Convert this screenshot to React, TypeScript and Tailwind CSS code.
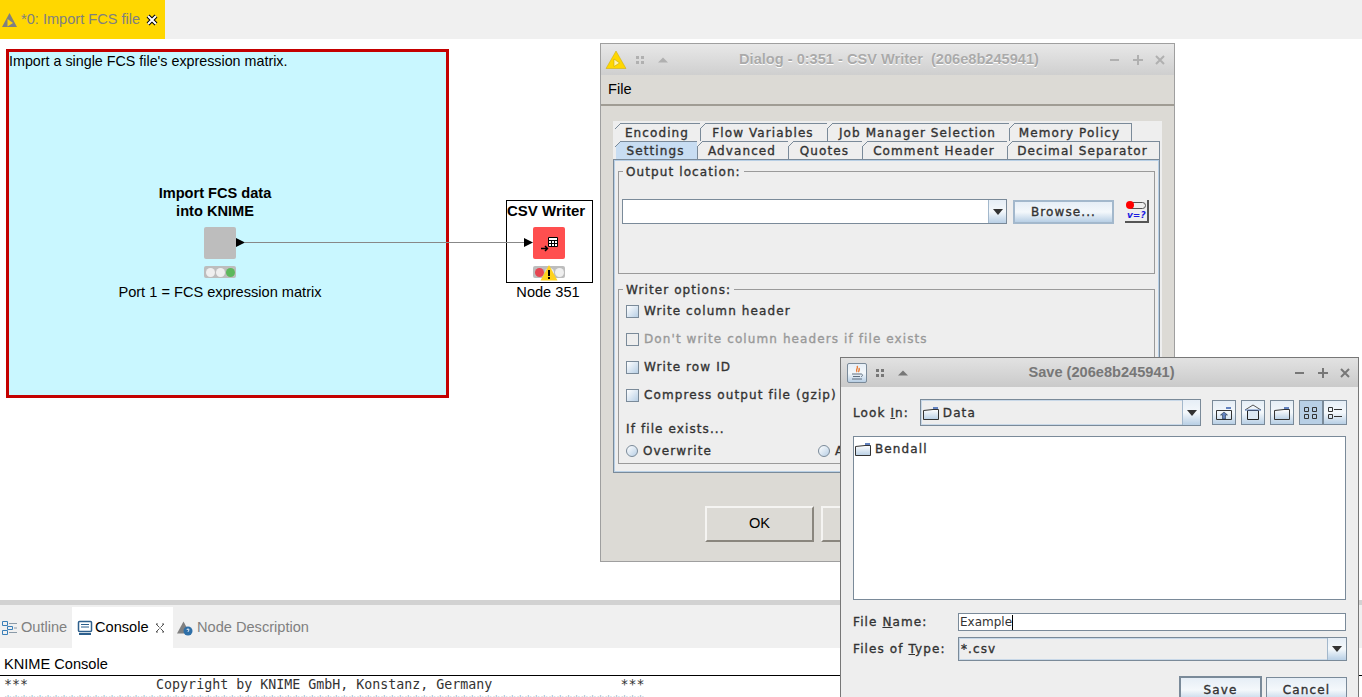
const sans = "font-['Liberation_Sans',Arial,sans-serif]";
const metal = "font-['DejaVu_Sans',sans-serif] text-[12px] font-normal text-[#333333] tracking-[1.1px] [-webkit-text-stroke:0.35px_currentColor]";
const oceanBtn = "bg-gradient-to-b from-[#e6eef6] via-[#f4f8fb] to-[#b8cfe5]";

function KnimeTriangle({ fill = "#808080", className }: { fill?: string; className?: string }) {
  return (
    <svg viewBox="0 0 16 16" className={className}>
      <path d="M8 1 L15.5 15 H0.5 Z" fill={fill} />
      <path d="M6 7 L11.5 11 L6 14.5 Z" fill={fill === "#808080" ? "#ffd700" : "#fff"} />
    </svg>
  );
}

function TitleControls({ dark }: { dark?: boolean }) {
  const c = dark ? "#777777" : "#b0b0b0";
  return (
    <svg width="57" height="12" viewBox="0 0 57 12">
      <path d="M1 6h9" stroke={c} strokeWidth="2" />
      <path d="M24 6h10M29 1v10" stroke={c} strokeWidth="2" />
      <path d="M47 2l8 8M55 2l-8 8" stroke={c} strokeWidth="2" />
    </svg>
  );
}

function GripMenu({ dark }: { dark?: boolean }) {
  const c = dark ? "#777777" : "#b0b0b0";
  return (
    <svg width="34" height="12" viewBox="0 0 34 12">
      <rect x="1" y="2" width="3" height="3" fill={c} />
      <rect x="6" y="2" width="3" height="3" fill={c} />
      <rect x="1" y="7" width="3" height="3" fill={c} />
      <rect x="6" y="7" width="3" height="3" fill={c} />
      <path d="M23 8.500l5-5 5 5z" fill={c} />
    </svg>
  );
}

function Tab({ label, w, active }: { label: string; w: number; active?: boolean }) {
  return (
    <div
      style={{ width: w }}
      className={
        "relative flex h-[18px] shrink-0 items-center justify-center border-r border-t border-[#7a8a99] pr-[2px] " +
        (active ? "bg-[#c8ddf2]" : "bg-[#eeeeee]")
      }
    >
      <svg width="6" height="6" viewBox="0 0 6 6" className="absolute -left-px -top-px">
        <path d="M0 0h6L0 6z" fill="#eeeeee" />
        <path d="M0 6L6 0" stroke="#7a8a99" />
      </svg>
      <span className={metal + " whitespace-pre"}>{label}</span>
    </div>
  );
}

function Check({ label, disabled }: { label: string; disabled?: boolean }) {
  return (
    <div className="flex h-[28px] items-center gap-[5px]">
      <span
        className={
          "h-[13px] w-[13px] border border-[#7a8a99] " +
          (disabled ? "bg-[#eeeeee]" : "bg-gradient-to-br from-white to-[#b8cfe5]")
        }
      />
      <span className={metal + (disabled ? " !text-[#999999]" : "")}>{label}</span>
    </div>
  );
}

function Radio({ label, className }: { label: string; className?: string }) {
  return (
    <div className={"flex items-center gap-[5px] " + (className || "")}>
      <span className="h-[12px] w-[12px] rounded-full border border-[#7a8a99] bg-gradient-to-br from-white to-[#b8cfe5]" />
      <span className={metal}>{label}</span>
    </div>
  );
}

function ComboArrow({ w }: { w: number }) {
  return (
    <div
      style={{ width: w }}
      className={"flex h-full shrink-0 items-center justify-center border-l border-[#a3b8cc] " + oceanBtn}
    >
      <svg width="10" height="6" viewBox="0 0 10 6">
        <path d="M0 0h10L5 6z" fill="#333333" />
      </svg>
    </div>
  );
}

function Folder({ className }: { className?: string }) {
  return (
    <svg viewBox="0 0 16 14" className={className}>
      <defs>
        <linearGradient id="fld" x1="0" y1="0" x2="0" y2="1">
          <stop offset="0" stopColor="#ffffff" />
          <stop offset="1" stopColor="#b8cfe5" />
        </linearGradient>
      </defs>
      <path d="M10 1h5v2h-5z" fill="#6382bf" />
      <path d="M0.5 4.5 L10 3.5 H15.5 V13.5 H0.5 Z" fill="url(#fld)" stroke="#333333" />
    </svg>
  );
}

function ToolButton({ children, on }: { children: React.ReactNode; on?: boolean }) {
  return (
    <div
      className={
        "flex h-[25px] w-[24px] items-center justify-center border border-[#7a8a99] " +
        (on ? "bg-[#b8cfe5]" : oceanBtn)
      }
    >
      {children}
    </div>
  );
}

function MetalButton({ label, w, strong }: { label: string; w: number; strong?: boolean }) {
  return (
    <div
      style={{ width: w }}
      className={
        "flex h-[26px] items-center justify-center border border-[#7a8a99] " +
        oceanBtn +
        (strong ? " outline outline-1 outline-[#7a8a99]" : "")
      }
    >
      <span className={metal}>{label}</span>
    </div>
  );
}

function Traffic({ colors }: { colors: string[] }) {
  return (
    <div className="flex h-[12px] w-[32px] items-center justify-center gap-[1px] rounded-[2px] bg-[#bdbdbd]">
      {colors.map((c, i) => (
        <span key={i} style={{ background: c }} className="h-[9px] w-[9px] rounded-full" />
      ))}
    </div>
  );
}

function Fieldset({ title, className, children }: { title: string; className?: string; children?: React.ReactNode }) {
  return (
    <div className={"relative border border-[#9a9a9a] " + (className || "")}>
      <span className={metal + " absolute -top-[9px] left-[4px] bg-[#eeeeee] px-[3px] !text-[#333333]"}>{title}</span>
      {children}
    </div>
  );
}

function CsvDialog() {
  return (
    <div className="absolute left-[600px] top-[4px] flex h-[519px] w-[575px] flex-col border border-[#9f9f9f] bg-[#dcdad5]">
      <div className={"flex h-[31px] shrink-0 items-center bg-gradient-to-b from-[#e8e8e8] to-[#cfcfcf] pl-[4px] pr-[8px] " + sans}>
        <KnimeWarn />
        <div className="ml-[8px]">
          <GripMenu />
        </div>
        <span className="flex-1 whitespace-pre text-center text-[14.6px] font-bold text-[#aaaaaa] [text-shadow:0_1px_0_#ffffff]">
          {"Dialog - 0:351 - CSV Writer  (206e8b245941)"}
        </span>
        <TitleControls />
      </div>
      <div className={"flex h-[31px] shrink-0 items-center border-b-2 border-[#a09c94] pl-[7px] text-[14.6px] text-black " + sans}>File</div>
      <div className="ml-[12px] mt-[15px] w-[549px] bg-[#eeeeee] pt-[2px]">
        <div className="flex pl-[3px]">
          <Tab label="Encoding" w={85} />
          <Tab label="Flow Variables" w={127} />
          <Tab label="Job Manager Selection" w={182} />
          <Tab label="Memory Policy" w={122} />
        </div>
        <div className="flex pl-[3px]">
          <Tab label="Settings" w={82} active />
          <Tab label="Advanced" w={91} />
          <Tab label="Quotes" w={74} />
          <Tab label="Comment Header" w={145} />
          <Tab label="Decimal Separator" w={152} />
        </div>
        <div className="mr-[2px] h-[314px] border border-[#7a8a99] bg-[#eeeeee] p-[2px] ring-1 ring-inset ring-[#b8cfe5]">
          <div className="flex h-full flex-col px-[2px] pt-[9px]">
            <Fieldset title="Output location:" className="h-[103px]">
              <div className="ml-[3px] mt-[27px] flex items-center">
                <div className="flex h-[25px] w-[385px] border border-[#7a8a99] bg-white">
                  <div className="flex-1" />
                  <ComboArrow w={18} />
                </div>
                <div className={"ml-[6px] flex h-[24px] w-[101px] items-center justify-center border-2 border-[#a3b8cc] " + oceanBtn}>
                  <span className={metal}>Browse...</span>
                </div>
                <div className="relative ml-[11px] h-[23px] w-[24px] border-b-2 border-r-2 border-[#555555] bg-[#eeeeee]">
                  <span className="absolute left-[5px] top-[2px] h-[7px] w-[16px] rounded-r-full border border-[#555555]" />
                  <span className="absolute left-[1px] top-[1px] h-[8px] w-[8px] rounded-full bg-[#ff0000]" />
                  <span className="absolute left-[2px] top-[10px] font-['DejaVu_Sans',sans-serif] text-[9px] font-bold italic leading-[10px] text-[#1a1ae0]">v=?</span>
                </div>
              </div>
            </Fieldset>
            <Fieldset title="Writer options:" className="mt-[15px] h-[175px]">
              <div className="flex flex-col pl-[7px] pt-[7px]">
                <Check label="Write column header" />
                <Check label="Don't write column headers if file exists" disabled />
                <Check label="Write row ID" />
                <Check label="Compress output file (gzip)" />
                <span className={metal + " mt-[11px]"}>If file exists...</span>
                <div className="mt-[4px] flex">
                  <Radio label="Overwrite" className="w-[192px]" />
                  <Radio label="Append" />
                </div>
              </div>
            </Fieldset>
          </div>
        </div>
      </div>
      <div className="ml-[104px] mt-[33px] flex gap-[7px]">
        <div className={"flex h-[36px] w-[109px] items-center justify-center border-2 border-b-[#8a867e] border-l-[#f5f4f2] border-r-[#8a867e] border-t-[#f5f4f2] text-[14.6px] text-black " + sans}>OK</div>
        <div className={"flex h-[36px] w-[109px] items-center justify-center border-2 border-b-[#8a867e] border-l-[#f5f4f2] border-r-[#8a867e] border-t-[#f5f4f2] text-[14.6px] text-black " + sans}>Cancel</div>
      </div>
    </div>
  );
}

function KnimeWarn() {
  return (
    <svg width="22" height="20" viewBox="0 0 22 20">
      <path d="M11 1 L21 18.500 H1 Z" fill="#ffd700" stroke="#c8a800" strokeWidth="0.5" />
      <path d="M9 9 L14.500 13 L9 16.500 Z" fill="#fff5b0" stroke="#b89a00" strokeWidth="0.5" />
    </svg>
  );
}

function JavaIcon() {
  return (
    <div className={"flex h-[20px] w-[20px] items-center justify-center rounded-[2px] border border-[#7a8a99] " + oceanBtn}>
      <svg width="16" height="16" viewBox="0 0 16 16">
        <path d="M8 1c2 2-2 3 0 6M10 3c1 2-1 3 0 4" stroke="#e8772e" strokeWidth="1.4" fill="none" />
        <path d="M3 9h9M4 11.500h7M3 14h10" stroke="#5f6f80" strokeWidth="1.2" />
        <path d="M12 9c2 0 2 2.500 0 2.500" stroke="#5f6f80" fill="none" />
      </svg>
    </div>
  );
}

function SaveDialog() {
  return (
    <div className="absolute left-[840px] top-[318px] flex h-[345px] w-[519px] flex-col border border-[#777777] bg-[#eeeeee]">
      <div className={"flex h-[29px] shrink-0 items-center bg-gradient-to-b from-[#e2e2e2] to-[#cacaca] pl-[6px] pr-[7px] " + sans}>
        <JavaIcon />
        <div className="ml-[8px]">
          <GripMenu dark />
        </div>
        <span className="flex-1 text-center text-[14.6px] font-bold text-[#777777]">Save (206e8b245941)</span>
        <TitleControls dark />
      </div>
      <div className="flex flex-col pl-[12px] pr-[11px]">
        <div className="mt-[12px] flex items-center">
          <span className={metal + " w-[67px]"}>
            Look <u>I</u>n:
          </span>
          <div className="flex h-[27px] w-[282px] border border-[#7a8a99] bg-[#eeeeee] ring-1 ring-inset ring-[#c8d8e8]">
            <div className="flex flex-1 items-center gap-[4px] pl-[2px]">
              <Folder className="h-[14px] w-[16px]" />
              <span className={metal}>Data</span>
            </div>
            <ComboArrow w={18} />
          </div>
          <div className="ml-[11px] flex gap-[5px]">
            <ToolButton>
              <svg width="16" height="14" viewBox="0 0 16 14">
                <path d="M10 1h5v2h-5z" fill="#6382bf" />
                <path d="M0.500 4.500H15.500V13.500H0.500Z" fill="none" stroke="#333" />
                <path d="M8 6l3.500 3H9.500V13H6.500V9H4.500z" fill="#6382bf" stroke="#123" strokeWidth="0.5" />
              </svg>
            </ToolButton>
            <ToolButton>
              <svg width="18" height="17" viewBox="0 0 18 17">
                <path d="M1 6L9 1l8 5" fill="none" stroke="#555" />
                <path d="M3.500 6.500h11v9h-11z" fill="#dde8f3" stroke="#222" />
                <path d="M1 6h16" stroke="#6382bf" />
              </svg>
            </ToolButton>
            <ToolButton>
              <Folder className="h-[14px] w-[16px]" />
            </ToolButton>
            <div className="flex">
              <ToolButton on>
                <svg width="16" height="14" viewBox="0 0 16 14" fill="none" stroke="#333">
                  <path d="M1.500 1.500h4v4h-4zM1.500 8.500h4v4h-4zM9.500 1.500h4v4h-4zM9.500 8.500h4v4h-4z" />
                </svg>
              </ToolButton>
              <ToolButton>
                <svg width="16" height="14" viewBox="0 0 16 14" fill="none" stroke="#333">
                  <path d="M1.500 1.500h4v4h-4zM1.500 8.500h4v4h-4zM7 3.500h8M7 10.500h8" />
                </svg>
              </ToolButton>
            </div>
          </div>
        </div>
        <div className="mt-[10px] h-[164px] w-[493px] border border-[#7a8a99] bg-white pl-[1px] pt-[3px]">
          <div className="flex items-center gap-[4px]">
            <Folder className="h-[14px] w-[16px]" />
            <span className={metal}>Bendall</span>
          </div>
        </div>
        <div className="mt-[13px] flex items-center">
          <span className={metal + " w-[105px]"}>
            File <u>N</u>ame:
          </span>
          <div className="flex h-[18px] w-[388px] items-center border border-[#7a8a99] bg-white pl-[1px] font-['DejaVu_Sans',sans-serif] text-[12px] text-[#333333]">
            Example<span className="h-[15px] w-px bg-black" />
          </div>
        </div>
        <div className="mt-[6px] flex items-center">
          <span className={metal + " w-[105px]"}>
            Files of <u>T</u>ype:
          </span>
          <div className="flex h-[24px] w-[389px] border border-[#7a8a99] bg-[#eeeeee] ring-1 ring-inset ring-[#c8d8e8]">
            <span className={metal + " flex flex-1 items-center pl-[2px]"}>*.csv</span>
            <ComboArrow w={19} />
          </div>
        </div>
        <div className="mt-[16px] flex justify-end gap-[5px]">
          <MetalButton label="Save" w={81} strong />
          <MetalButton label="Cancel" w={81} />
        </div>
      </div>
    </div>
  );
}

function Workflow() {
  return (
    <div className="relative h-[561px] shrink-0 bg-white">
      <div className={"absolute left-[6px] top-[10px] h-[349px] w-[443px] border-[3px] border-[#c40000] bg-[#c9f7ff] text-[14.3px] leading-[18px] text-black " + sans}>
        <div>Import a single FCS file's expression matrix.</div>
      </div>

      <div className={"absolute left-[506px] top-[161px] h-[83px] w-[87px] border border-black bg-white pt-px text-[15px] font-bold leading-[18px] text-black " + sans}>CSV Writer</div>

      <div className={"absolute left-[120px] top-[145px] w-[200px] pr-[10px] text-center text-[14.6px] font-bold leading-[18px] text-black " + sans}>
        Import FCS data
        <br />
        into KNIME
      </div>
      <div className="absolute left-[204px] top-[188px] h-[32px] w-[32px] rounded-[2px] bg-[#bdbdbd]" />
      <div className="absolute left-[204px] top-[227px]">
        <Traffic colors={["#efefef", "#efefef", "#5cb85c"]} />
      </div>
      <div className={"absolute left-[70px] top-[244px] w-[300px] text-center text-[14.6px] leading-[18px] text-black " + sans}>Port 1 = FCS expression matrix</div>

      <svg width="300" height="14" viewBox="0 0 300 14" className="absolute left-[236px] top-[196px]">
        <path d="M9 7.500H290" stroke="#888888" />
        <path d="M0 3l9 4.500-9 4.500z" fill="#000000" />
        <path d="M288 3l9 4.500-9 4.500z" fill="#000000" />
      </svg>

      <div className="absolute left-[533px] top-[188px] flex h-[32px] w-[32px] items-center justify-center rounded-[2px] bg-[#ff4f4f]">
        <svg width="20" height="20" viewBox="0 0 20 20">
          <path d="M9.500 4.500h9v9h-9zM9.500 7.500h9M9.500 10.500h9M12.500 7.500v6M15.500 7.500v6" fill="#fff" stroke="#000" />
          <path d="M2 15.500h6M6 13l2.500 2.500L6 18" fill="none" stroke="#000" strokeWidth="1.500" />
        </svg>
      </div>
      <div className="absolute left-[533px] top-[227px]">
        <Traffic colors={["#e64552", "#efefef", "#efefef"]} />
      </div>
      <svg width="18" height="16" viewBox="0 0 18 16" className="absolute left-[540px] top-[226px]">
        <path d="M9 0l8.500 15.500H.5z" fill="#ffd21f" />
        <path d="M9 5v6M9 12v2" stroke="#000" strokeWidth="2" />
      </svg>
      <div className={"absolute left-[498px] top-[244px] w-[100px] text-center text-[14.6px] leading-[18px] text-black " + sans}>Node 351</div>

      <CsvDialog />
      <SaveDialog />
    </div>
  );
}

export default function App() {
  return (
    <div className="flex h-[697px] w-[1362px] flex-col overflow-hidden bg-white">
      <div className="flex h-[39px] shrink-0 bg-[#f0f0f0]">
        <div className={"flex w-[165px] items-center bg-[#ffd700] pl-[1px] text-[14.6px] text-[#808080] " + sans}>
          <KnimeTriangle className="h-[16px] w-[17px]" />
          <span className="ml-[3px]">*0: Import FCS file</span>
          <svg width="12" height="12" viewBox="0 0 12 12" className="ml-[6px]">
            <path d="M2 2l8 8M10 2l-8 8" stroke="#000" strokeWidth="4" />
            <path d="M2 2l8 8M10 2l-8 8" stroke="#fff" strokeWidth="2" />
          </svg>
        </div>
      </div>
      <Workflow />
      <div className="h-[5px] shrink-0 bg-[#d2d2d2]" />
      <div className={"flex h-[43px] shrink-0 items-stretch bg-[#f0f0f0] pt-[2px] text-[14.6px] " + sans}>
        <div className="flex w-[72px] items-center pl-[2px] text-[#808080]">
          <svg width="16" height="16" viewBox="0 0 16 16" fill="none" stroke="#3a7fb8">
            <path d="M.5 1.500h5v4h-5zM.5 10.500h5v4h-5zM5.500 6.500h5v3h-5z" />
            <path d="M7 3.500h8M12 8h3M7 12.500h8" stroke="#8a9aa8" />
          </svg>
          <span className="ml-[3px]">Outline</span>
        </div>
        <div className="flex w-[101px] items-center bg-white pl-[5px] text-black">
          <svg width="16" height="16" viewBox="0 0 16 16">
            <rect x="1.500" y="1.500" width="13" height="10" rx="1" fill="#fff" stroke="#2d5f8c" strokeWidth="1.500" />
            <path d="M4 4.500h8M4 7h8" stroke="#2d5f8c" />
            <path d="M2 14h12" stroke="#2d5f8c" strokeWidth="2" />
          </svg>
          <span className="ml-[2px]">Console</span>
          <svg width="10" height="10" viewBox="0 0 10 10" className="ml-[6px]" fill="none" stroke="#555">
            <path d="M1 1l3.500 3.500M5.500 5.500L9 9M9 1L5.500 4.500M4.500 5.500L1 9M1 1h2M9 1H7M1 9h2M9 9H7" />
          </svg>
        </div>
        <div className="flex items-center pl-[4px] text-[#808080]">
          <svg width="16" height="16" viewBox="0 0 16 16">
            <path d="M6.500 1.500L13 13.500H0z" fill="#808080" />
            <circle cx="11" cy="11" r="4.500" fill="#2e6fa8" />
            <path d="M10 10c0-1.500 2-1.500 2 0 0 .8-1 .8-1 1.800" stroke="#fff" fill="none" />
          </svg>
          <span className="ml-[4px]">Node Description</span>
        </div>
      </div>
      <div className={"flex h-[28px] shrink-0 items-center border-b border-black pl-[4px] pt-[7px] text-[14.6px] text-black " + sans}>KNIME Console</div>
      <div className="whitespace-pre pl-[4px] pt-px font-['DejaVu_Sans_Mono',monospace] text-[13.3px] leading-[16px] text-[#333333]">
        {"***                Copyright by KNIME GmbH, Konstanz, Germany                ***"}
        {"\n"}
        <span className="text-[#8fb0c0]">{"*".repeat(80)}</span>
      </div>
    </div>
  );
}
